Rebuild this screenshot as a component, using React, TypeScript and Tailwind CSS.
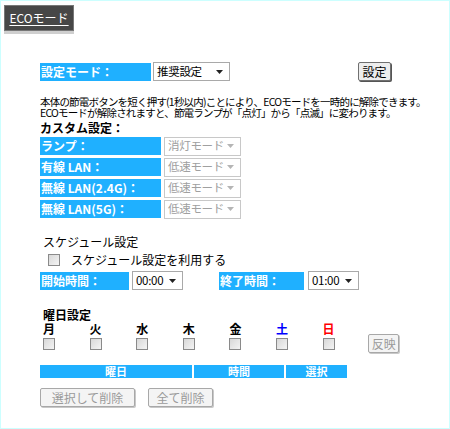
import * as React from 'react';

const font = { fontFamily: '"Noto Sans CJK JP", "MS PGothic", sans-serif' };

const Arrow: React.FC<{ disabled?: boolean }> = ({ disabled }) => (
  <svg width="7" height="4" viewBox="0 0 7 4" className="shrink-0">
    <path d="M0 0h7L3.5 4z" fill={disabled ? '#b5b5b5' : '#222'} />
  </svg>
);

const Select: React.FC<{ value: string; w: string; disabled?: boolean }> = ({ value, w, disabled }) => (
  <div
    className={`${w} h-[19px] flex items-center justify-between pl-[3px] pr-[6px] border bg-white text-[11.5px] leading-none whitespace-nowrap ${
      disabled ? 'border-[#c8c8c8] text-[#a0a0a0]' : 'border-[#a9a9a9] text-black'
    }`}
  >
    <span className="tracking-[-0.3px]">{value}</span>
    <Arrow disabled={disabled} />
  </div>
);

const Label: React.FC<{ text: string; w: string }> = ({ text, w }) => (
  <div className={`${w} h-[18px] bg-[#1fb0ff] text-white text-[12px] font-bold leading-[18px] pl-[1px] whitespace-nowrap`}>
    {text}
  </div>
);

const Check: React.FC = () => (
  <div className="w-[12px] h-[12px] border border-[#8a8a8a] bg-gradient-to-br from-[#d8d8d8] to-[#f4f4f4]" />
);

const Btn: React.FC<{ text: string; w: string; disabled?: boolean }> = ({ text, w, disabled }) => (
  <div
    className={`${w} h-[19px] flex items-center justify-center rounded-[2px] border text-[12px] leading-none whitespace-nowrap ${
      disabled
        ? 'border-[#a8a8a8] bg-[#f4f4f4] text-[#9a9a9a] shadow-[1px_1px_0_#c8c8c8]'
        : 'border-[#707070] bg-[#ededed] text-black shadow-[1px_1px_0_#555]'
    }`}
  >
    {text}
  </div>
);

const days = [
  { d: '月', c: 'text-black' },
  { d: '火', c: 'text-black' },
  { d: '水', c: 'text-black' },
  { d: '木', c: 'text-black' },
  { d: '金', c: 'text-black' },
  { d: '土', c: 'text-[#0000ff]' },
  { d: '日', c: 'text-[#ff0000]' },
];

const custom = [
  { l: 'ランプ：', v: '消灯モード' },
  { l: '有線 LAN：', v: '低速モード' },
  { l: '無線 LAN(2.4G)：', v: '低速モード' },
  { l: '無線 LAN(5G)：', v: '低速モード' },
];

export default function App() {
  return (
    <div style={font} className="w-[450px] h-[429px] border border-[#ccffff] bg-white text-black overflow-hidden">
      <div className="pt-[4px] pl-[3px]">
        <div className="w-[70px]">
          <div className="h-[26px] bg-[#474747] border border-[#777] flex items-center justify-center">
            <span className="text-white text-[12px] underline underline-offset-2">ECOモード</span>
          </div>
          <div className="h-[3px] bg-[#cfcfcf]" />
        </div>
      </div>

      <div className="pl-[39px] pt-[28px]">
        <div className="flex items-center h-[19px]">
          <Label text="設定モード：" w="w-[111px]" />
          <div className="ml-[2px]">
            <Select value="推奨設定" w="w-[77px]" />
          </div>
          <div className="ml-[128px]">
            <Btn text="設定" w="w-[33px]" />
          </div>
        </div>

        <div className="mt-[15px] text-[10.5px] leading-[11px] tracking-[-0.8px] whitespace-nowrap">
          <p>本体の節電ボタンを短く押す(1秒以内)ことにより、ECOモードを一時的に解除できます。</p>
          <p>ECOモードが解除されますと、節電ランプが「点灯」から「点滅」に変わります。</p>
        </div>

        <div className="mt-[3px] text-[12px] font-bold leading-[14px]">カスタム設定：</div>

        <div className="mt-[2px] flex flex-col gap-[3px]">
          {custom.map((r) => (
            <div key={r.l} className="flex items-center h-[18px]">
              <Label text={r.l} w="w-[121px]" />
              <div className="ml-[3px]">
                <Select value={r.v} w="w-[77px]" disabled />
              </div>
            </div>
          ))}
        </div>

        <div className="mt-[17px] pl-[3px] text-[12px] leading-[14px]">スケジュール設定</div>
        <div className="mt-[4px] pl-[8px] flex items-center h-[14px]">
          <Check />
          <span className="ml-[11px] text-[12px]">スケジュール設定を利用する</span>
        </div>

        <div className="mt-[4px] flex items-center h-[19px]">
          <Label text="開始時間：" w="w-[89px]" />
          <div className="ml-[3px]">
            <Select value="00:00" w="w-[51px]" />
          </div>
          <div className="ml-[36px]">
            <Label text="終了時間：" w="w-[85px]" />
          </div>
          <div className="ml-[4px]">
            <Select value="01:00" w="w-[51px]" />
          </div>
        </div>

        <div className="mt-[18px] pl-[3px] text-[12px] font-bold leading-[14px]">曜日設定</div>
        <div className="flex items-end pl-[3px]">
          {days.map((x) => (
            <div key={x.d} className="w-[46.6px] flex flex-col">
              <span className={`text-[12px] font-bold leading-[14px] ${x.c}`}>{x.d}</span>
              <div className="mt-[2px]">
                <Check />
              </div>
            </div>
          ))}
          <div className="ml-[-1px] mb-[-3px]">
            <Btn text="反映" w="w-[31px]" disabled />
          </div>
        </div>

        <div className="mt-[15px] flex gap-[2px] h-[13px] text-white text-[11px] font-bold leading-[13px]">
          <div className="w-[152px] bg-[#1fb0ff] text-center">曜日</div>
          <div className="w-[90px] bg-[#1fb0ff] text-center">時間</div>
          <div className="w-[61px] bg-[#1fb0ff] text-center">選択</div>
        </div>

        <div className="mt-[10px] flex gap-[13px]">
          <Btn text="選択して削除" w="w-[95px]" disabled />
          <Btn text="全て削除" w="w-[65px]" disabled />
        </div>
      </div>
    </div>
  );
}
